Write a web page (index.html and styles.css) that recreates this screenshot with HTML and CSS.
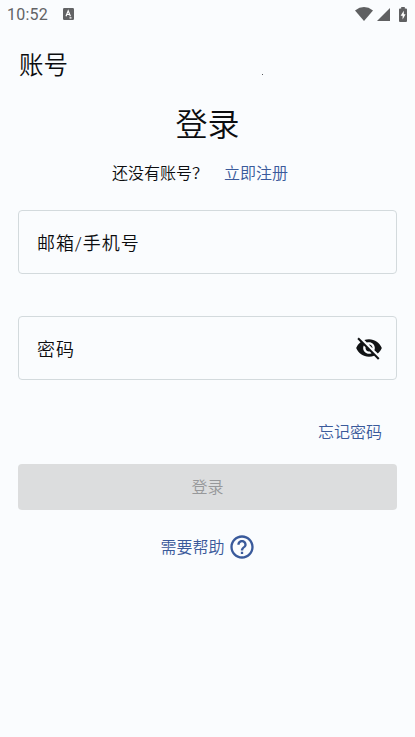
FILE: index.html
```html
<!DOCTYPE html>
<html lang="zh-CN">
<head>
<meta charset="utf-8">
<title>登录</title>
<link rel="stylesheet" href="styles.css">
</head>
<body>
<header class="status">
  <span class="clock">10:52</span>
  <svg class="input-badge" width="11" height="12" viewBox="0 0 11 12"><rect width="11" height="12" rx="1.2" fill="#626365"/><path d="M3 8.2 5.2 2.8 7.4 8.2M3.8 6.5h2.8M6.5 9.8h2" fill="none" stroke="#fff" stroke-width="1.2"/></svg>
  <svg class="wifi" width="18" height="14" viewBox="0 0 18 14"><path d="M0 3.4Q9-3.4 18 3.4L9 14Z" fill="#5f6062"/></svg>
  <svg class="signal" width="13" height="13" viewBox="0 0 13 13"><path d="M13 0V13H0Z" fill="#5f6062"/></svg>
  <svg class="battery" width="8" height="15" viewBox="0 0 8 15"><path d="M2.2 0h3.6v1.5H7q1 0 1 1V14q0 1-1 1H1q-1 0-1-1V2.500q0-1 1-1h1.200Z" fill="#5f6062"/><path d="M4.800 3.800 1.600 8.800h2v3.600l3-5.200H4.800Z" fill="#fff"/></svg>
</header>
<main class="page">
  <div class="title-row"><span class="title">账号</span><i class="dot"></i></div>
  <h1 class="heading">登录</h1>
  <p class="register"><span>还没有账号？</span><a class="link">立即注册</a></p>
  <div class="field field-account"><span>邮箱/手机号</span></div>
  <div class="field">
    <span>密码</span>
    <svg width="28" height="28" viewBox="0 0 24 24" fill="#111315"><path d="M12 7c2.760 0 5 2.240 5 5 0 .65-.13 1.260-.36 1.830l2.920 2.920c1.510-1.260 2.700-2.890 3.430-4.750-1.730-4.390-6-7.500-11-7.500-1.400 0-2.740.25-3.980.7l2.160 2.160C10.740 7.130 11.350 7 12 7zM2 4.270l2.280 2.280.46.46C3.080 8.300 1.780 10.020 1 12c1.730 4.390 6 7.500 11 7.500 1.550 0 3.030-.3 4.380-.84l.42.42L19.730 22 21 20.730 3.270 3 2 4.270zM7.530 9.800l1.550 1.550c-.05.21-.08.43-.08.65 0 1.660 1.340 3 3 3 .22 0 .44-.03.65-.08l1.550 1.550c-.67.33-1.410.53-2.200.53-2.760 0-5-2.240-5-5 0-.79.2-1.530.53-2.200zm4.310-.78l3.150 3.150.02-.16c0-1.660-1.340-3-3-3l-.17.01z"/></svg>
  </div>
  <a class="link forgot">忘记密码</a>
  <button class="submit" disabled>登录</button>
  <a class="link help"><span>需要帮助</span><svg width="28" height="28" viewBox="0 0 24 24" fill="currentColor"><path d="M11 18h2v-2h-2v2zm1-16C6.480 2 2 6.480 2 12s4.480 10 10 10 10-4.480 10-10S17.520 2 12 2zm0 18c-4.410 0-8-3.590-8-8s3.590-8 8-8 8 3.590 8 8-3.590 8-8 8zm0-14c-2.210 0-4 1.790-4 4h2c0-1.100.9-2 2-2s2 .9 2 2c0 2-3 1.750-3 5h2c0-2.250 3-2.500 3-5 0-2.210-1.790-4-4-4z"/></svg></a>
</main>
</body>
</html>
```
FILE: styles.css
```css
* { box-sizing: border-box; }
body {
  margin: 0;
  height: 737px;
  background: #fafcfe;
  color: #0c0d0f;
  font-family: Roboto, "Noto Sans CJK SC", sans-serif;
  font-size: 16px;
  font-weight: 350;
}
.status {
  display: flex;
  align-items: center;
  height: 28px;
  padding: 0 8px 0 7px;
}
.clock {
  width: 56px;
  padding-top: 2px;
  color: #626365;
  font-size: 16px;
  font-weight: 400;
  line-height: 26px;
  letter-spacing: 0.2px;
}
.wifi { margin-left: auto; }
.signal { margin-left: 4px; }
.battery { margin-left: 9px; }
.page {
  display: flex;
  flex-direction: column;
  padding: 0 18px;
}
.title-row {
  display: flex;
  align-items: center;
  height: 74px;
  font-size: 24.5px;
}
.title {
  width: 244px;
  padding: 0 0 4px 1px;
}
.dot {
  width: 1px;
  height: 1px;
  margin-top: 19px;
  background: #55585c;
}
.heading {
  margin: 0;
  height: 46px;
  font-size: 32px;
  font-weight: 350;
  line-height: 46px;
  text-align: center;
}
.register {
  display: flex;
  margin: 0 0 24.5px 94px;
  height: 37px;
  padding-top: 14px;
  line-height: 24px;
}
.register span { width: 112px; }
.link { color: #3a5a9b; }
.field {
  display: flex;
  align-items: center;
  justify-content: space-between;
  height: 64px;
  padding: 0 13px 0 18px;
  border: 1px solid #d3dadd;
  border-radius: 4px;
  font-size: 18px;
  letter-spacing: 0.9px;
}
.field-account { margin-bottom: 42.5px; }
.forgot {
  align-self: flex-end;
  margin: 41px 15px 19px 0;
  line-height: 24px;
}
.submit {
  height: 46px;
  padding: 0 0 2px;
  border: 0;
  border-radius: 4px;
  background: #dcddde;
  color: #97989a;
  font: inherit;
}
.help {
  display: flex;
  align-items: center;
  gap: 3px;
  height: 28px;
  margin: 23px 0 0 142.5px;
}
.help span { padding-bottom: 2px; }
```
